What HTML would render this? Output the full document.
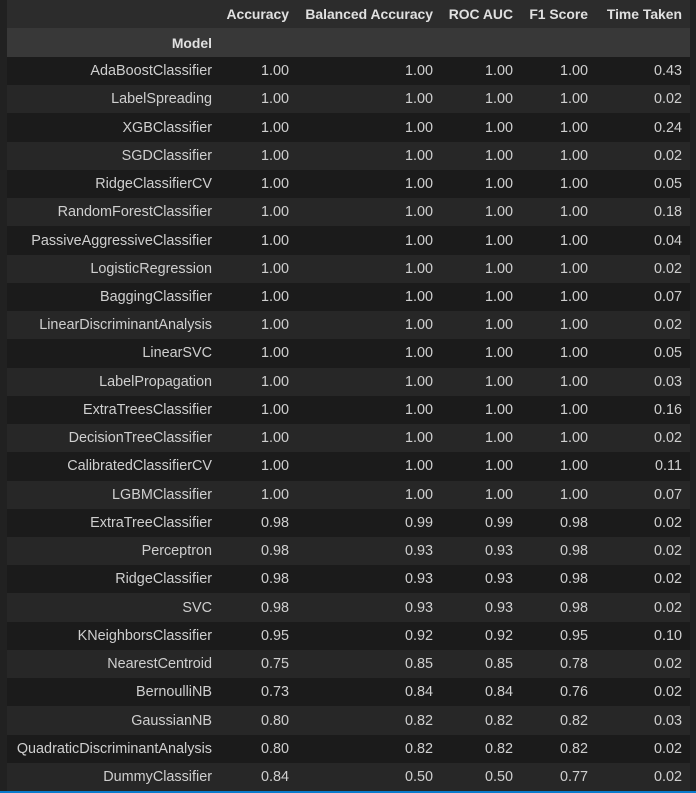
<!DOCTYPE html>
<html><head><meta charset="utf-8"><style>
html,body{margin:0;padding:0;background:#212121;width:696px;height:793px;overflow:hidden}
table{position:absolute;left:7px;top:0;border-collapse:collapse;table-layout:fixed;width:683px;
font-family:"Liberation Sans",sans-serif;font-size:14.4px;color:#cfcfcf}
td,th{padding:0 8px 0 0;text-align:right;white-space:nowrap;overflow:hidden}
tr{height:28.24px}
thead tr.h1{height:28px;background:#2c2c2c}
thead tr.h2{height:29px;background:#383838}
th{font-weight:bold;color:#e0e0e0;font-size:13.9px}
tbody tr:nth-child(odd){background:#1b1b1b}
tbody tr:nth-child(even){background:#272727}
.bar{position:absolute;left:0;top:791px;width:696px;height:2px;background:#0a7acc}
</style></head><body>
<table>
<colgroup><col style="width:213px"><col style="width:77px"><col style="width:144px"><col style="width:80px"><col style="width:75px"><col style="width:94px"></colgroup>
<thead>
<tr class="h1"><th></th><th>Accuracy</th><th>Balanced Accuracy</th><th>ROC AUC</th><th>F1 Score</th><th>Time Taken</th></tr>
<tr class="h2"><th>Model</th><th></th><th></th><th></th><th></th><th></th></tr>
</thead>
<tbody>
<tr><td>AdaBoostClassifier</td><td>1.00</td><td>1.00</td><td>1.00</td><td>1.00</td><td>0.43</td></tr>
<tr><td>LabelSpreading</td><td>1.00</td><td>1.00</td><td>1.00</td><td>1.00</td><td>0.02</td></tr>
<tr><td>XGBClassifier</td><td>1.00</td><td>1.00</td><td>1.00</td><td>1.00</td><td>0.24</td></tr>
<tr><td>SGDClassifier</td><td>1.00</td><td>1.00</td><td>1.00</td><td>1.00</td><td>0.02</td></tr>
<tr><td>RidgeClassifierCV</td><td>1.00</td><td>1.00</td><td>1.00</td><td>1.00</td><td>0.05</td></tr>
<tr><td>RandomForestClassifier</td><td>1.00</td><td>1.00</td><td>1.00</td><td>1.00</td><td>0.18</td></tr>
<tr><td>PassiveAggressiveClassifier</td><td>1.00</td><td>1.00</td><td>1.00</td><td>1.00</td><td>0.04</td></tr>
<tr><td>LogisticRegression</td><td>1.00</td><td>1.00</td><td>1.00</td><td>1.00</td><td>0.02</td></tr>
<tr><td>BaggingClassifier</td><td>1.00</td><td>1.00</td><td>1.00</td><td>1.00</td><td>0.07</td></tr>
<tr><td>LinearDiscriminantAnalysis</td><td>1.00</td><td>1.00</td><td>1.00</td><td>1.00</td><td>0.02</td></tr>
<tr><td>LinearSVC</td><td>1.00</td><td>1.00</td><td>1.00</td><td>1.00</td><td>0.05</td></tr>
<tr><td>LabelPropagation</td><td>1.00</td><td>1.00</td><td>1.00</td><td>1.00</td><td>0.03</td></tr>
<tr><td>ExtraTreesClassifier</td><td>1.00</td><td>1.00</td><td>1.00</td><td>1.00</td><td>0.16</td></tr>
<tr><td>DecisionTreeClassifier</td><td>1.00</td><td>1.00</td><td>1.00</td><td>1.00</td><td>0.02</td></tr>
<tr><td>CalibratedClassifierCV</td><td>1.00</td><td>1.00</td><td>1.00</td><td>1.00</td><td>0.11</td></tr>
<tr><td>LGBMClassifier</td><td>1.00</td><td>1.00</td><td>1.00</td><td>1.00</td><td>0.07</td></tr>
<tr><td>ExtraTreeClassifier</td><td>0.98</td><td>0.99</td><td>0.99</td><td>0.98</td><td>0.02</td></tr>
<tr><td>Perceptron</td><td>0.98</td><td>0.93</td><td>0.93</td><td>0.98</td><td>0.02</td></tr>
<tr><td>RidgeClassifier</td><td>0.98</td><td>0.93</td><td>0.93</td><td>0.98</td><td>0.02</td></tr>
<tr><td>SVC</td><td>0.98</td><td>0.93</td><td>0.93</td><td>0.98</td><td>0.02</td></tr>
<tr><td>KNeighborsClassifier</td><td>0.95</td><td>0.92</td><td>0.92</td><td>0.95</td><td>0.10</td></tr>
<tr><td>NearestCentroid</td><td>0.75</td><td>0.85</td><td>0.85</td><td>0.78</td><td>0.02</td></tr>
<tr><td>BernoulliNB</td><td>0.73</td><td>0.84</td><td>0.84</td><td>0.76</td><td>0.02</td></tr>
<tr><td>GaussianNB</td><td>0.80</td><td>0.82</td><td>0.82</td><td>0.82</td><td>0.03</td></tr>
<tr><td>QuadraticDiscriminantAnalysis</td><td>0.80</td><td>0.82</td><td>0.82</td><td>0.82</td><td>0.02</td></tr>
<tr><td>DummyClassifier</td><td>0.84</td><td>0.50</td><td>0.50</td><td>0.77</td><td>0.02</td></tr>
</tbody>
</table>
<div class="bar"></div>
</body></html>
